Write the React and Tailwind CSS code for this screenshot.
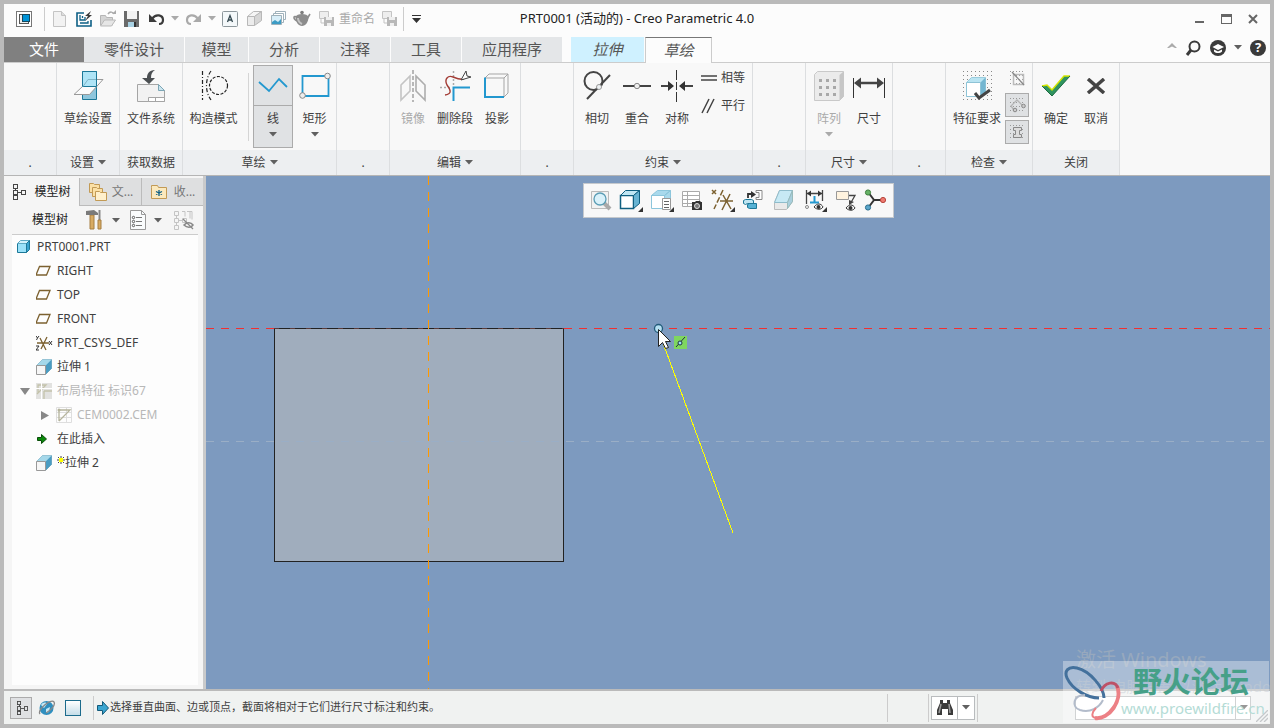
import React from "react";

const Caret = ({ className = "text-[#606060]" }) => (
  <svg width="8" height="5" viewBox="0 0 8 5" className={`shrink-0 ${className}`}>
    <path d="M0 0h8L4 4.5z" fill="currentColor" />
  </svg>
);

/* ---------- shared icons ---------- */

const TreeIcon = ({ color = "#444", size = 16 }) => (
  <svg width={size} height={size} viewBox="0 0 16 16" fill="none" stroke={color} shapeRendering="crispEdges">
    <path d="M1.5 .5h4v4h-4zM1.5 6.5h4v4h-4zM1.5 11.5h4v4h-4zM9.5 6.5h4v4h-4zM3.5 4v3M3.5 10v2M6 8.5h3" />
  </svg>
);

const NewIcon = () => (
  <svg width="16" height="18" viewBox="0 0 16 18">
    <path d="M1.5 1.5h8l4 4v11h-12z" fill="#f2f2f2" stroke="#c4c4c4" />
    <path d="M9.500 1.500v4h4" fill="#ddd" stroke="#c4c4c4" />
  </svg>
);

const RegenSaveIcon = () => (
  <svg width="18" height="18" viewBox="0 0 18 18" fill="none">
    <path d="M9 3H2v13h14v-6" stroke="#0d5f85" strokeWidth="1.6" />
    <path d="M5 5v5h5v-3M5 13h8v-2M7.500 6v2" stroke="#0d5f85" strokeWidth="1.300" />
    <path d="M16 1l-6 5h3l-3 5 7-6h-3z" fill="#3b3b3b" />
  </svg>
);

const OpenIcon = () => (
  <svg width="18" height="18" viewBox="0 0 18 18">
    <path d="M1.500 15V5.500h5l1 2h6V15z" fill="#d5d5d5" stroke="#b5b5b5" />
    <path d="M1.500 16l4-6h11l-4 6z" fill="#e6e6e6" stroke="#b9b9b9" />
    <path d="M9 4c2-3 5-2 6 0" fill="none" stroke="#aaa" strokeWidth="1.500" />
    <path d="M13 4h4v-4z" fill="#aaa" />
  </svg>
);

const SaveIcon = () => (
  <svg width="16" height="16" viewBox="0 0 16 16">
    <path d="M0 0h15v16H0z" fill="#6a6a6a" />
    <path d="M3 0h10v8H3z" fill="#f2f2f2" />
    <path d="M4 11h8v5H4z" fill="#a9d2e4" />
    <path d="M10 11h2v5h-2z" fill="#333" />
  </svg>
);

const UndoIcon = ({ flip, color }) => (
  <svg width="17" height="14" viewBox="0 0 17 14" className={flip ? "-scale-x-100" : ""}>
    <path d="M4 7c4-6 11-4 11 1 0 3-2 4-4 4" fill="none" stroke={color} strokeWidth="2.200" />
    <path d="M1 2v8h8z" fill={color} />
  </svg>
);

const AIcon = () => (
  <svg width="16" height="16" viewBox="0 0 16 16">
    <rect x=".5" y=".5" width="15" height="15" rx="1" fill="#f4f8fa" stroke="#8d979c" />
    <path d="M5.500 11L8 4.500l2.500 6.500M6.500 9h3" fill="none" stroke="#33474f" strokeWidth="1.300" />
  </svg>
);

const GreyBoxIcon = () => (
  <svg width="17" height="17" viewBox="0 0 17 17" stroke="#b8b8b8">
    <path d="M1.500 6.500h7v9h-7z" fill="#ececec" />
    <path d="M1.500 6.500l6-5h8l-7 5z" fill="#f5f5f5" />
    <path d="M8.500 6.500l7-5v9l-7 5z" fill="#d6d6d6" />
  </svg>
);

const LayersIcon = () => (
  <svg width="17" height="17" viewBox="0 0 17 17" stroke="#9fb1ba">
    <path d="M5.500 1.500h10v8h-10z" fill="#fff" />
    <path d="M3.500 3.500h10v9h-10z" fill="#fff" />
    <path d="M1.500 5.500h10v9h-10z" fill="#d8eef8" />
    <path d="M2 12l3-2 3 2 3-3v5H2z" fill="#3c9cc5" stroke="none" />
  </svg>
);

const TeapotIcon = () => (
  <svg width="18" height="17" viewBox="0 0 18 17">
    <path d="M4 7c-4-2-4 2 0 4M14 9l3-5" fill="none" stroke="#8c8c8c" strokeWidth="1.600" />
    <path d="M2.500 7c0 5 3 9 6.500 9s6.500-4 6.500-9c-1-4-12-4-13 0z" fill="#8c8c8c" />
    <path d="M5 8c0 3 2 5 4 6" fill="none" stroke="#c4c4c4" strokeWidth="2" />
    <circle cx="9" cy="2.500" r="1.800" fill="#7c7c7c" />
  </svg>
);

const RenameIcon = () => (
  <svg width="17" height="17" viewBox="0 0 17 17">
    <path d="M1.500 1.500h9v7h-9z" fill="#eee" stroke="#c4c4c4" />
    <path d="M3 9v4h3" fill="none" stroke="#c4c4c4" />
    <path d="M6 7h10v9H6z" fill="#b8b8b8" />
    <path d="M8 7h6v3H8zM9 13h4v3H9z" fill="#efefef" />
  </svg>
);

const CubeIcon = () => (
  <svg width="16" height="16" viewBox="0 0 16 16" stroke="#1c7898">
    <path d="M.5 4.500h9v9h-9z" fill="#9be2fa" />
    <path d="M.5 4.500l3-3h9l-3 3z" fill="#d3f3fd" stroke="#5da9c4" />
    <path d="M9.500 4.500l3-3v9l-3 3z" fill="#3aa5d0" />
  </svg>
);

const PlaneIcon = () => (
  <svg width="16" height="16" viewBox="0 0 16 16">
    <path d="M3.500 3.500H14l-3.500 8.500H0z" fill="none" stroke="#7c6130" strokeWidth="1.300" />
  </svg>
);

const CsysIcon = () => (
  <svg width="18" height="16" viewBox="0 0 18 16" fill="none">
    <path d="M1 8h12M4 3l6 12M11 2L5 14" stroke="#7c6130" strokeWidth="1.300" />
    <path d="M0 1l1.500 2L3 1M1.500 3L.5 5M0 11h3l-3 4h3M13 6l3 4M16 6l-3 4" stroke="#333" />
  </svg>
);

const ExtrudeIcon = () => (
  <svg width="17" height="17" viewBox="0 0 17 17">
    <path d="M.5 6.500l6-6h9v9l-6 6" fill="#7fc4e0" stroke="#86b0c2" />
    <path d="M9.500 6.500l6-6v9l-6 6z" fill="#4a9cc2" />
    <path d="M.5 6.500l6-6h9l-6 6z" fill="#a5d8ea" />
    <path d="M.5 6.500h9v9h-9z" fill="#f6f6f6" stroke="#999" />
  </svg>
);

const LayoutFeatureIcon = () => (
  <svg width="16" height="16" viewBox="0 0 16 16">
    <path d="M0 0h16v16H0z" fill="#e2e2e0" />
    <path d="M2 10V2h8L1 11M8 8h8M8 8v8" fill="none" stroke="#c3c2aa" strokeWidth="1.300" />
    <path d="M0 5.500h16M5.500 0v16" stroke="#fff" />
  </svg>
);

const CemIcon = () => (
  <svg width="16" height="16" viewBox="0 0 16 16" fill="none">
    <path d="M.5.5h15v15H.5zM0 5.500h16M0 10.500h16M10.500 0v16" stroke="#dedede" />
    <path d="M3 14V3h11L3 14" stroke="#b5b49c" strokeWidth="1.300" />
    <circle cx="3" cy="3" r="1.500" fill="#b5b49c" />
  </svg>
);

const InsertIcon = () => (
  <svg width="16" height="16" viewBox="0 0 16 16">
    <path d="M1.500 6.500h4v-3l5 4.500-5 4.500v-3h-4z" fill="#0b8a0b" stroke="#0a4d0a" />
  </svg>
);

const SparkIcon = () => (
  <svg width="8" height="8" viewBox="0 0 8 8" className="mb-1.5 shrink-0">
    <path d="M4 0v8M0 4h8M1 1l6 6M7 1L1 7" stroke="#444" strokeWidth="1" />
    <path d="M2 2h4v4H2z" fill="#ff0" />
  </svg>
);

/* ---------- ribbon icons ---------- */

const SketchSetupIcon = () => (
  <svg width="32" height="32" viewBox="0 0 32 32">
    <path d="M10.500 1.500h14v28h-14z" fill="#8fc6dc" stroke="#1c7898" />
    <path d="M24.500 9.500h6.500L17.500 24.500H2L10.500 16.500z" fill="#fbfbfb" stroke="#999" />
    <path d="M10.500 1.500h14v15h-14z" fill="#aee4f6" stroke="#1c7898" />
    <path d="M16 9.500h8" stroke="#7fb5c8" />
    <path d="M11 16.500l5-7" stroke="#7fb5c8" />
  </svg>
);

const FileSystemIcon = () => (
  <svg width="32" height="34" viewBox="0 0 32 34">
    <path d="M2.500 15.500h21l6 6v11h-27z" fill="#f2f2f2" stroke="#a5a5a5" />
    <path d="M23.500 15.500v6h6z" fill="#cbe5ef" stroke="#7da6b5" />
    <path d="M13.500 28.500h16v4h-16zM20.500 28.500v4" fill="#fff" stroke="#a5a5a5" />
    <path d="M20 1c-6 0-8 4-8 8H7l7 6 6-6h-4c0-4 1-6 4-8z" fill="#4b4f52" />
  </svg>
);

const ConstructionIcon = () => (
  <svg width="32" height="32" viewBox="0 0 32 32" fill="none" stroke="#222" strokeWidth="1.200">
    <path d="M4.500 1v29" strokeDasharray="4 2 1 2" />
    <path d="M13 1c-6 8-6 21 0 29" strokeDasharray="4 2 1 2" />
    <circle cx="20.500" cy="15.500" r="9" strokeDasharray="3 1.500" />
  </svg>
);

const LineIcon = () => (
  <svg width="30" height="18" viewBox="0 0 30 18" fill="none" stroke="#2398cf" strokeWidth="1.800">
    <path d="M1 5l10 9L21 2l8 8" />
  </svg>
);

const RectIcon = () => (
  <svg width="32" height="28" viewBox="0 0 32 28">
    <path d="M3.500 4h26v20h-26z" fill="none" stroke="#2398cf" strokeWidth="1.800" />
    <circle cx="28.500" cy="4" r="2.800" fill="#eee" stroke="#888" />
    <circle cx="3.500" cy="23.500" r="2.800" fill="#eee" stroke="#888" />
  </svg>
);

const MirrorIcon = () => (
  <svg width="28" height="34" viewBox="0 0 28 34" fill="none">
    <path d="M2 16l9-9v15l-9 9z" stroke="#c4c4c4" strokeWidth="1.600" />
    <path d="M26 16l-9-9v15l9 9z" stroke="#adadad" strokeWidth="1.600" />
    <path d="M14 1v32" stroke="#777" strokeDasharray="4 2" />
  </svg>
);

const DeleteSegIcon = () => (
  <svg width="32" height="34" viewBox="0 0 32 34" fill="none">
    <path d="M14.500 2v14M1 18.500h12" stroke="#aaa" strokeDasharray="2 2" strokeWidth="1.500" />
    <path d="M6 26c8-1 5-6 2-10C5 10 9 6 14 8c5 2 8 3 11 2" stroke="#a33c35" strokeWidth="1.400" />
    <path d="M14.500 32V18.500H31" stroke="#2398cf" strokeWidth="2" />
    <path d="M22 11l5-9 1 5 4 1z" fill="#fff" stroke="#444" />
  </svg>
);

const ProjectIcon = () => (
  <svg width="28" height="28" viewBox="0 0 28 28" fill="none">
    <path d="M2 6l4-4h19v19l-4 4M21 6l4-4M21 6v19M2 6h19" stroke="#a5a5a5" />
    <path d="M2 5.500V25h19" stroke="#2398cf" strokeWidth="2" />
  </svg>
);

const TangentIcon = () => (
  <svg width="32" height="32" viewBox="0 0 32 32" fill="none" stroke="#444" strokeWidth="2">
    <circle cx="12.500" cy="11" r="9" />
    <path d="M6 29L29 5" />
    <circle cx="18" cy="17" r="2.500" fill="#eef2f4" stroke="#999" strokeWidth="1" />
  </svg>
);

const CoincidentIcon = () => (
  <svg width="30" height="10" viewBox="0 0 30 10">
    <path d="M1 5h28" stroke="#444" strokeWidth="2" />
    <circle cx="15" cy="5" r="2.700" fill="#eee" stroke="#888" />
  </svg>
);

const SymmetricIcon = () => (
  <svg width="32" height="34" viewBox="0 0 32 34">
    <path d="M15.500 1v10M15.500 13v8M15.500 23v10" stroke="#333" />
    <path d="M0 17h9M22 17h10" stroke="#444" strokeWidth="2" />
    <path d="M7 12l6 5-6 5zM24 12l-6 5 6 5z" fill="#333" />
  </svg>
);

const PatternIcon = () => (
  <svg width="32" height="32" viewBox="0 0 32 32">
    <path d="M1.500 4.500l3-3h26v25l-4 4h-25z" fill="#ebebeb" stroke="#c9c9c9" />
    <path d="M26.500 5l4-3.500v25l-4 4z" fill="#c6c6c6" />
    <path
      d="M6 9h3v3H6zM13 9h3v3h-3zM20 9h3v3h-3zM6 16h3v3H6zM13 16h3v3h-3zM20 16h3v3h-3zM6 23h3v3H6zM13 23h3v3h-3zM20 23h3v3h-3z"
      fill="#a8a8a8"
    />
  </svg>
);

const DimIcon = () => (
  <svg width="34" height="26" viewBox="0 0 34 26">
    <path d="M1.500 5v20M32.500 5v20" stroke="#333" />
    <path d="M7 10h20" stroke="#444" strokeWidth="2.500" />
    <path d="M2 10l7-5.500v11zM32 10l-7-5.500v11z" fill="#444" />
  </svg>
);

const FeatureReqIcon = () => (
  <svg width="32" height="32" viewBox="0 0 32 32">
    <path
      d="M2 1.500h29M2 5.500h29M2 9.500h29M2 13.500h29M2 17.500h29M2 21.500h29M2 25.500h29M2 29.500h29"
      stroke="#888"
      strokeDasharray="1 3"
    />
    <path d="M5.500 12.500l5-5h14v14l-5 5h-14z" fill="#b9e4f2" stroke="#9accdd" />
    <path d="M19.500 12.500l5-5v14l-5 5z" fill="#73b6d1" />
    <path d="M5.500 12.500h14v14h-14z" fill="#fff" stroke="#8ec3d6" />
    <path d="M14 23l4 5 11-8" fill="none" stroke="#444" strokeWidth="3" />
  </svg>
);

const dots = (
  <path d="M1 1.500h15M1 5.500h15M1 9.500h15M1 13.500h15" stroke="#999" strokeDasharray="1 2" />
);

const OverlapIcon = () => (
  <svg width="17" height="17" viewBox="0 0 17 17" fill="none" stroke="#bbb">
    {dots}
    <path d="M4.500 4.500h10v10h-10z" strokeWidth="1.500" />
    <path d="M3 2l12 13" stroke="#888" strokeWidth="1.300" />
  </svg>
);

const OpenEndsIcon = () => (
  <svg width="17" height="17" viewBox="0 0 17 17" fill="none" stroke="#b5b5b5">
    {dots}
    <path d="M5 13L2 9l6-6 6 6" strokeWidth="1.300" />
    <circle cx="6" cy="13" r="1.800" fill="#ccc" stroke="#888" />
    <circle cx="14.500" cy="9" r="1.800" fill="#ccc" stroke="#888" />
  </svg>
);

const ShadeLoopIcon = () => (
  <svg width="17" height="17" viewBox="0 0 17 17" fill="#ddd" stroke="#888">
    {dots}
    <path d="M4.500 3.500h8v3h-2v4h2v3h-8v-3h2v-4h-2z" />
  </svg>
);

const OkIcon = () => (
  <svg width="30" height="22" viewBox="0 0 30 22">
    <path d="M1 11l5-1 5 5L23 1h6L11 21z" fill="#2f9460" />
    <path d="M1 11l5-1 5 5L23 1h6" fill="none" stroke="#d3e600" strokeWidth="1.500" />
    <path d="M1 11l10 10L29 1" fill="none" stroke="#1c6b41" />
  </svg>
);

const CancelIcon = () => (
  <svg width="20" height="16" viewBox="0 0 20 16">
    <path d="M2 1l16 14M18 1L2 15" stroke="#444" strokeWidth="3.500" />
  </svg>
);

/* ---------- ribbon building blocks ---------- */

const Group = ({ title = ".", caret, width, children }) => (
  <section className={`flex shrink-0 flex-col border-r border-[#dcdee0] ${width}`}>
    <div className="flex h-[87px] justify-center pt-0.5">{children}</div>
    <div className="flex h-[25px] items-center justify-center gap-1 bg-[#edeff1]">
      <span>{title}</span>
      {caret && <Caret />}
    </div>
  </section>
);

const Tool = ({ icon, label, width = "w-10", disabled, caret, active }) => (
  <button
    disabled={disabled}
    className={`flex h-[83px] flex-col items-center border whitespace-nowrap ${width} ${
      disabled ? "text-[#aaa]" : ""
    } ${active ? "border-[#ababab] bg-[#e0e2e4]" : "border-transparent"}`}
  >
    <span
      className={`flex h-10 w-full items-center justify-center border-b ${
        active ? "border-[#ababab]" : "border-transparent"
      }`}
    >
      {icon}
    </span>
    <span className="mt-1 leading-[18px]">{label}</span>
    {caret && <Caret className={disabled ? "mt-1 text-[#aaa]" : "mt-1 text-[#606060]"} />}
  </button>
);

const tabs = [
  { name: "零件设计", width: "w-[100px]" },
  { name: "模型", width: "w-[63px]" },
  { name: "分析", width: "w-[70px]" },
  { name: "注释", width: "w-[70px]" },
  { name: "工具", width: "w-[70px]" },
  { name: "应用程序", width: "w-[100px]" },
];

const TitleBar = () => (
  <header className="grid h-[33px] grid-cols-[1fr_auto_1fr] items-center pb-1">
    <div className="flex items-center text-xs">
      <button aria-label="窗口" className="flex w-10 justify-center">
        <svg width="16" height="16" viewBox="0 0 16 16" shapeRendering="crispEdges">
          <path d="M.5.5h15v15H.5z" fill="#fff" stroke="#777" />
          <path d="M3.500 3.500h9v9h-9z" fill="#eee" stroke="#555" />
          <path d="M6 3h7v7H6z" fill="#0094d8" stroke="#17475c" />
        </svg>
      </button>
      <span className="mr-[3px] h-6 w-px bg-[#ccc]" />
      <button aria-label="新建" className="flex w-6 justify-center"><NewIcon /></button>
      <button aria-label="重新生成" className="flex w-6 justify-center"><RegenSaveIcon /></button>
      <button aria-label="打开" className="flex w-6 justify-center"><OpenIcon /></button>
      <button aria-label="保存" className="flex w-6 justify-center"><SaveIcon /></button>
      <button aria-label="撤消" className="flex w-6 justify-center"><UndoIcon color="#3c3c3c" /></button>
      <button aria-label="撤消列表" className="flex w-[13px] justify-center"><Caret className="text-[#aaa]" /></button>
      <button aria-label="重做" className="flex w-6 justify-center"><UndoIcon flip color="#aaa" /></button>
      <button aria-label="重做列表" className="flex w-[13px] justify-center"><Caret className="text-[#aaa]" /></button>
      <button aria-label="注释" className="flex w-6 justify-center"><AIcon /></button>
      <button aria-label="模型" className="flex w-6 justify-center"><GreyBoxIcon /></button>
      <button aria-label="窗口列表" className="flex w-6 justify-center"><LayersIcon /></button>
      <button aria-label="渲染" className="flex w-6 justify-center"><TeapotIcon /></button>
      <button className="flex items-center gap-1 pl-1 text-[#aaa]">
        <RenameIcon />
        重命名
      </button>
      <button aria-label="另存" className="flex w-7 justify-center"><RenameIcon /></button>
      <span className="h-6 w-px bg-[#ccc]" />
      <button aria-label="自定义" className="flex w-6 justify-center">
        <svg width="9" height="8" viewBox="0 0 9 8" fill="#333">
          <path d="M0 0h9v1H0zM0 3h9L4.500 8z" />
        </svg>
      </button>
    </div>
    <h1 className="whitespace-nowrap text-[13px] text-[#222]">PRT0001 (活动的) - Creo Parametric 4.0</h1>
    <div className="flex items-center justify-end gap-4 pr-3 text-[#666]">
      <button aria-label="最小化">
        <svg width="10" height="10" viewBox="0 0 10 10"><path d="M0 7h9v2H0z" fill="currentColor" /></svg>
      </button>
      <button aria-label="最大化">
        <svg width="11" height="10" viewBox="0 0 11 10" shapeRendering="crispEdges">
          <path d="M.5.5h10v9H.5z" fill="none" stroke="currentColor" />
          <path d="M0 0h11v3H0z" fill="currentColor" />
        </svg>
      </button>
      <button aria-label="关闭">
        <svg width="10" height="10" viewBox="0 0 10 10"><path d="M1 1l8 8M9 1L1 9" stroke="currentColor" strokeWidth="2" /></svg>
      </button>
    </div>
  </header>
);

const TabBar = () => (
  <nav className="flex h-[26px] items-stretch border-b border-[#ccc] text-[15px] text-[#555]">
    <button className="w-20 bg-[#808080] text-white">文件</button>
    <div className="flex gap-px">
      {tabs.map((t) => (
        <button key={t.name} className={`bg-[#e4e6e8] ${t.width}`}>{t.name}</button>
      ))}
    </div>
    <button className="ml-[9px] w-[73px] bg-[#cff1ff] italic">拉伸</button>
    <button className="-mb-px ml-px w-[67px] border border-b-0 border-[#ccc] border-t-[#777] bg-[#fcfcfc] italic">草绘</button>
    <div className="ml-auto flex items-center gap-2 pr-1 pb-1 text-[#3a3a3a]">
      <button aria-label="折叠功能区" className="mb-1">
        <svg width="10" height="6" viewBox="0 0 10 6"><path d="M0 5l5-5 5 5H8L5 3.500 2 5z" fill="#aaa" /></svg>
      </button>
      <button aria-label="搜索">
        <svg width="17" height="16" viewBox="0 0 17 16" fill="none" stroke="currentColor">
          <circle cx="9.500" cy="6.500" r="5" strokeWidth="2" />
          <path d="M6 10l-4 5" strokeWidth="3" />
        </svg>
      </button>
      <button aria-label="学习连接器">
        <svg width="16" height="16" viewBox="0 0 16 16">
          <circle cx="8" cy="8" r="8" fill="currentColor" />
          <path d="M2.500 7L8 4l6 3-6 3z" fill="#fff" />
          <path d="M4 9.500v2c2 2 6 2 8 0v-2l-4 2z" fill="#fff" />
        </svg>
      </button>
      <button aria-label="帮助菜单"><Caret /></button>
      <button aria-label="帮助" className="flex size-4 items-center justify-center rounded-full bg-[#3a3a3a] text-[13px] font-bold text-white">?</button>
    </div>
  </nav>
);

const Ribbon = () => (
  <div className="flex overflow-hidden border-b border-[#b5b5b5] bg-[#f8f8f8] text-xs text-[#404040]">
    <Group width="w-[53px]" />
    <Group width="w-[63px]" title="设置" caret>
      <Tool width="w-full" icon={<SketchSetupIcon />} label="草绘设置" />
    </Group>
    <Group width="w-[63px]" title="获取数据">
      <Tool width="w-full" icon={<FileSystemIcon />} label="文件系统" />
    </Group>
    <Group width="w-[154px]" title="草绘" caret>
      <Tool width="w-[61px]" icon={<ConstructionIcon />} label="构造模式" />
      <span className="mx-1 mt-2 h-[68px] w-px bg-[#d5d5d5]" />
      <Tool active caret icon={<LineIcon />} label="线" />
      <Tool width="w-[43px]" caret icon={<RectIcon />} label="矩形" />
    </Group>
    <Group width="w-[53px]" />
    <Group width="w-[131px]" title="编辑" caret>
      <Tool disabled icon={<MirrorIcon />} label="镜像" />
      <Tool width="w-11" icon={<DeleteSegIcon />} label="删除段" />
      <Tool icon={<ProjectIcon />} label="投影" />
    </Group>
    <Group width="w-[53px]" />
    <Group width="w-[179px]" title="约束" caret>
      <Tool icon={<TangentIcon />} label="相切" />
      <Tool icon={<CoincidentIcon />} label="重合" />
      <Tool icon={<SymmetricIcon />} label="对称" />
      <div className="flex flex-col gap-2.5 pt-1 pr-1 pl-1">
        <button className="flex items-center gap-1 leading-[18px]">
          <svg width="16" height="16" viewBox="0 0 16 16"><path d="M0 6h16M0 10h16" stroke="#444" strokeWidth="1.500" /></svg>
          相等
        </button>
        <button className="flex items-center gap-1 leading-[18px]">
          <svg width="16" height="16" viewBox="0 0 16 16"><path d="M1 15L8 1M6 15l7-14" stroke="#444" strokeWidth="1.500" /></svg>
          平行
        </button>
      </div>
    </Group>
    <Group width="w-[53px]" />
    <Group width="w-[87px]" title="尺寸" caret>
      <Tool disabled caret icon={<PatternIcon />} label="阵列" />
      <Tool icon={<DimIcon />} label="尺寸" />
    </Group>
    <Group width="w-[53px]" />
    <Group width="w-[87px]" title="检查" caret>
      <Tool width="w-14" icon={<FeatureReqIcon />} label="特征要求" />
      <div className="flex flex-col gap-[3px] pt-px">
        <button aria-label="重叠几何" className="flex size-6 items-center justify-center"><OverlapIcon /></button>
        <button aria-label="突出显示开放端" className="flex size-6 items-center justify-center border border-[#ababab] bg-[#dfe1e3]"><OpenEndsIcon /></button>
        <button aria-label="着色封闭环" className="flex size-6 items-center justify-center border border-[#ababab] bg-[#dfe1e3]"><ShadeLoopIcon /></button>
      </div>
    </Group>
    <Group width="w-[87px]" title="关闭">
      <Tool icon={<OkIcon />} label="确定" />
      <Tool icon={<CancelIcon />} label="取消" />
    </Group>
  </div>
);

/* ---------- model tree ---------- */

const treeItems = [
  { label: "PRT0001.PRT", icon: <CubeIcon />, level: 0 },
  { label: "RIGHT", icon: <PlaneIcon />, level: 1 },
  { label: "TOP", icon: <PlaneIcon />, level: 1 },
  { label: "FRONT", icon: <PlaneIcon />, level: 1 },
  { label: "PRT_CSYS_DEF", icon: <CsysIcon />, level: 1 },
  { label: "拉伸 1", icon: <ExtrudeIcon />, level: 1 },
  { label: "布局特征 标识67", icon: <LayoutFeatureIcon />, level: 1, dim: true, arrow: "down" },
  { label: "CEM0002.CEM", icon: <CemIcon />, level: 2, dim: true, arrow: "right" },
  { label: "在此插入", icon: <InsertIcon />, level: 1 },
  { label: "拉伸 2", icon: <ExtrudeIcon />, level: 1, isNew: true },
];

const FolderIcon = ({ star }) => (
  <svg width="20" height="20" viewBox="0 0 20 20" stroke="#c29a55">
    {star ? (
      <>
        <path d="M1.500 5.500v-2h6l1 2h8v11h-15z" fill="#fbe9bd" />
        <path d="M9 8v6M6 9.500l6 3M12 9.500l-6 3" stroke="#0d5f85" strokeWidth="1.300" />
      </>
    ) : (
      <>
        <path d="M1.500 1.500h4l1 1h5v8h-10z" fill="#fbe0a5" />
        <path d="M4.500 5.500h4l1 1h5v8h-10z" fill="#fbe0a5" />
        <path d="M7.500 9.500h4l1 1h6v8h-11z" fill="#fff0cc" />
      </>
    )}
  </svg>
);

const ModelTree = () => (
  <aside className="flex w-[202px] shrink-0 flex-col border-r-[3px] border-[#c9cacb] bg-[#f5f5f5] text-xs text-[#404040]">
    <div className="flex h-[30px] pt-0.5">
      <button className="flex w-[75px] items-center justify-center gap-1.5 pb-px whitespace-nowrap text-[#222]"><TreeIcon />模型树</button>
      <button className="flex flex-1 items-center justify-center gap-1 border-b border-l border-[#bbb] bg-[#dedfe0] text-[#777]"><FolderIcon />文...</button>
      <button className="flex flex-1 items-center justify-center gap-1 border-b border-l border-[#bbb] bg-[#dedfe0] text-[#777]"><FolderIcon star />收...</button>
    </div>
    <div className="mr-[5px] ml-2 flex h-[29px] items-center border-b border-[#ccc] pl-5">
      <h2 className="mr-4 text-[#222]">模型树</h2>
      <button aria-label="设置" className="flex items-center gap-2">
        <svg width="20" height="22" viewBox="0 0 20 22">
          <path d="M6 6h4v14H6z" fill="#d8ab63" stroke="#a67f42" />
          <path d="M2 6V2l8-1 4 3v2z" fill="#7a7a7a" />
          <path d="M15.500 1v10" stroke="#888" strokeWidth="2" />
          <path d="M14 11h3v9h-3z" fill="#d8ab63" stroke="#a67f42" />
        </svg>
        <Caret />
      </button>
      <button aria-label="显示" className="ml-2.5 flex items-center gap-2">
        <svg width="16" height="20" viewBox="0 0 16 20" fill="none">
          <path d="M.5.5h11l4 4v15H.5z" fill="#fafcfd" stroke="#999" />
          <path d="M11.500.5v4h4" stroke="#999" />
          <path d="M6 7.500h6M6 11.500h6M6 15.500h6" stroke="#777" />
          <circle cx="3.500" cy="7.500" r="1.200" stroke="#555" />
          <circle cx="3.500" cy="11.500" r="1.200" stroke="#555" />
          <circle cx="3.500" cy="15.500" r="1.200" stroke="#555" />
        </svg>
        <Caret />
      </button>
      <button aria-label="树过滤器" className="ml-3">
        <svg width="20" height="20" viewBox="0 0 20 20" fill="none" stroke="#c4c4c4">
          <path d="M.5 1.500h4v4h-4zM.5 8.500h4v4h-4zM.5 15.500h4v4h-4zM8.500 8.500h4v4h-4zM2.500 6v2M2.500 13v2M5 10.500h3M8 1.500h3v5M13 1.500h3v7M16 1.500h2v8" />
          <path d="M10 15c3-3 7-3 9 0-2 3-6 3-9 0z" stroke="#888" strokeWidth="1.500" />
          <path d="M9 9l10 10" stroke="#888" strokeWidth="1.300" />
        </svg>
      </button>
    </div>
    <ul className="mr-[5px] mb-1 ml-2 flex-1 bg-[#fdfdfd]">
      {treeItems.map((item) => (
        <li
          key={item.label}
          className={`flex h-6 items-center gap-1 whitespace-nowrap ${item.level === 2 ? "pl-[25px]" : "pl-[5px]"} ${
            item.dim ? "text-[#b8b8b8]" : ""
          }`}
        >
          {item.level > 0 && (
            <span className="flex w-[15px] shrink-0 justify-center">
              {item.arrow && (
                <svg width="10" height="9" viewBox="0 0 10 9" className="text-[#888]" fill="currentColor">
                  <path d={item.arrow === "down" ? "M0 1h10L5 8z" : "M1 0v9l8-4.500z"} />
                </svg>
              )}
            </span>
          )}
          <span className={item.level > 0 ? "w-[17px] shrink-0" : "w-4 shrink-0"}>{item.icon}</span>
          {item.isNew && <SparkIcon />}
          <button className={item.isNew ? "-ml-1" : ""}>{item.label}</button>
        </li>
      ))}
    </ul>
  </aside>
);

/* ---------- graphics area ---------- */

const Corner = () => <path d="M24 19v5h-5z" fill="#333" />;

const viewTools = [
  {
    name: "重新调整",
    art: (
      <>
        <path d="M2.500 3.500h17v17h-17z" fill="#f2f2f2" stroke="#bbb" />
        <path d="M15 15l6 6" stroke="#aaa" strokeWidth="4" />
        <circle cx="11" cy="11" r="6" fill="#d9f1fa" stroke="#5b9db5" strokeWidth="1.300" />
      </>
    ),
  },
  {
    name: "显示样式",
    art: (
      <>
        <path d="M1.500 7.500h13v13h-13z" fill="#fff" stroke="#0f5f80" strokeWidth="1.500" />
        <path d="M1.500 7.500l5-5h14l-6 5z" fill="#c0e6f3" stroke="#0f5f80" />
        <path d="M14.500 7.500l6-5v13l-6 5z" fill="#67b3d2" stroke="#0f5f80" />
        <Corner />
      </>
    ),
  },
  {
    name: "已保存方向",
    art: (
      <>
        <path d="M1.500 7.500h13v13h-13z" fill="#fff" stroke="#8cc6dc" />
        <path d="M1.500 7.500l6-5h13l-6 5zM14.500 7.500l6-5v13l-6 5z" fill="#a9d9ec" stroke="#8cc6dc" />
        <path d="M12.500 10.500h8v11h-8z" fill="#fff" stroke="#999" />
        <path d="M14 13.500h5M14 16.500h5M14 19.500h5" stroke="#666" />
        <Corner />
      </>
    ),
  },
  {
    name: "视图管理器",
    art: (
      <>
        <path d="M2.500 3.500h17v15h-17zM2 7.500h17M2 11.500h17M2 15.500h17M7.500 3v15" fill="#fff" stroke="#aaa" />
        <path d="M12 14h3l1-1h4l1 1h1v8H12z" fill="#333" />
        <circle cx="17" cy="18" r="2.500" fill="#777" stroke="#ddd" />
      </>
    ),
  },
  {
    name: "基准显示",
    art: (
      <>
        <path d="M1 2l4 4M5 2L1 6M12 2L3 21" stroke="#7c6130" strokeWidth="1.500" strokeDasharray="6 2" />
        <path d="M9 13h13M12 7l8 14M19 6l-8 16" stroke="#7c6130" strokeWidth="1.500" />
        <Corner />
      </>
    ),
  },
  {
    name: "注释显示",
    art: (
      <>
        <path d="M6 10V6h5" stroke="#333" strokeWidth="1.800" />
        <path d="M9 3l5 3.500L9 10z" fill="#333" />
        <path d="M14 2.500h6v9h-6v-2h3v-5h-3z" fill="#fff" stroke="#888" />
        <path d="M1.500 12.500l2-1h6l2 1v3h-6l-2 1-2-1z" fill="#bfe6f3" stroke="#1c7898" />
        <path d="M5.500 16.500l2-1h7v5h-7l-2-1z" fill="#55b2d5" stroke="#1c7898" />
      </>
    ),
  },
  {
    name: "透视图",
    art: (
      <>
        <path d="M2.500 14.500l5-12h13v11l-6 8h-12z" fill="#e9e9e9" stroke="#bbb" />
        <path d="M2.500 14.500l5-12h13l-5 12z" fill="#c7e9f4" stroke="#8fbccb" />
        <path d="M15.500 14.500v6l5-7v-11z" fill="#a9cfdd" stroke="#9bb" />
      </>
    ),
  },
  {
    name: "尺寸显示",
    art: (
      <>
        <path d="M3.500 2v14M19.500 2v11M4 5.500h15" stroke="#444" strokeWidth="1.300" />
        <path d="M4 5.500l4-3v6zM19 5.500l-4-3v6z" fill="#333" />
        <path d="M11.500 8v6M7 14.500h9" stroke="#2398cf" strokeWidth="2" />
        <circle cx="4" cy="19" r="1.500" stroke="#888" />
        <path d="M11 19c3-4 7-4 9 0-2 3-6 3-9 0z" fill="#fff" stroke="#333" />
        <circle cx="15.500" cy="19" r="2" fill="#333" />
        <Corner />
      </>
    ),
  },
  {
    name: "约束显示",
    art: (
      <>
        <path d="M2.500 3.500h12v8h-12z" fill="#fff3df" stroke="#999" />
        <path d="M15 7.500h6l-4 7" stroke="#444" strokeWidth="1.300" />
        <path d="M15 12v5l5-3z" fill="#444" />
        <path d="M12 20c3-4 7-4 9 0-2 3-6 3-9 0z" fill="#fff" stroke="#333" />
        <circle cx="16.500" cy="20" r="2" fill="#333" />
      </>
    ),
  },
  {
    name: "旋转中心",
    art: (
      <>
        <path d="M4 4l6 8-6 8M10 12h8" stroke="#333" strokeWidth="2" />
        <circle cx="4" cy="4.500" r="2.600" fill="#66b266" stroke="#3f7f3f" />
        <circle cx="4" cy="19.500" r="2.600" fill="#5aa5c9" stroke="#2c6f8f" />
        <circle cx="19" cy="12" r="2.600" fill="#ef7a70" stroke="#b5443b" />
      </>
    ),
  },
];

const GraphicsArea = () => (
  <main className="relative min-w-0 flex-1 overflow-hidden bg-[#7d9abf]">
    <svg className="absolute inset-0 size-full" fill="none">
      <rect x="68.500" y="152.500" width="289" height="233" fill="#a0adbd" stroke="#222" shapeRendering="crispEdges" />
      <path d="M0 265.500h2000" stroke="#9aaec6" strokeDasharray="8 7" />
      <path d="M0 152.500h68M358 152.500h2000" stroke="#f22f2f" strokeDasharray="8 7" shapeRendering="crispEdges" />
      <path d="M68 152.500h290" stroke="#5c3a3a" strokeDasharray="5 11" />
      <path d="M222.500 0v2000" stroke="#ff9900" strokeDasharray="9 7" shapeRendering="crispEdges" />
      <path d="M457 167l70 190" stroke="#ff0" shapeRendering="crispEdges" />
      <circle cx="452.500" cy="152.500" r="4" fill="#b5e0f2" stroke="#225a7a" strokeWidth="1.300" />
      <path d="M452.500 153.500v17l4-4 3 6 3-1-3-6h5z" fill="#fff" stroke="#222" />
      <path d="M468 160h13v13h-13z" fill="#7fd65f" />
      <path d="M470 171l9-10" stroke="#234" />
      <circle cx="474" cy="167" r="2" fill="#9be2fa" stroke="#234" />
    </svg>
    <div className="relative mx-auto mt-[7px] flex h-[35px] w-[311px] items-center justify-between border border-[#c5c9cd] bg-[#f8f8f8] pr-1 pb-0.5 pl-[5px]">
      {viewTools.map((t) => (
        <button key={t.name} aria-label={t.name}>
          <svg width="24" height="24" viewBox="0 0 24 24" fill="none">{t.art}</svg>
        </button>
      ))}
    </div>
  </main>
);

const StatusBar = () => (
  <footer className="flex h-[35px] items-center border-t-2 border-[#bababa] bg-[#f0f2f1] text-[11px] text-[#404040]">
    <button aria-label="导航器" className="ml-1.5 flex size-[22px] items-center justify-center border border-[#ababab] bg-[#dfe1e3] pl-1">
      <TreeIcon size={14} />
    </button>
    <button aria-label="浏览器" className="ml-1.5">
      <svg width="18" height="18" viewBox="0 0 18 18">
        <circle cx="8.500" cy="9" r="7" fill="#2f8fbf" />
        <path d="M3 6c2-3 5-3 6-1l-3 4zM8 10l4-2-1 5-3 1z" fill="#c4e9f6" />
        <path d="M2 15C-1 11 13-1 16 3c2 3-4 9-8 11" fill="none" stroke="#888" strokeWidth="1.300" />
      </svg>
    </button>
    <button aria-label="全屏" className="ml-[9px] size-4 border border-[#1c6b8c] bg-gradient-to-b from-white to-[#c5dde8]" />
    <span className="mr-[3px] ml-3 h-6 w-px bg-[#ccc]" />
    <svg width="12" height="14" viewBox="0 0 12 14">
      <path d="M.5 4.500h5v-4l6 6.500-6 6.500v-4h-5z" fill="#3aa5d0" stroke="#135a7a" />
    </svg>
    <p className="pl-px whitespace-nowrap">选择垂直曲面、边或顶点，截面将相对于它们进行尺寸标注和约束。</p>
    <span className="ml-auto h-7 w-px bg-[#ccc]" />
    <span className="mr-0.5 ml-10 h-7 w-px bg-[#ccc]" />
    <div className="mr-0.5 flex h-6 border border-[#b9bcbe] bg-white">
      <button aria-label="查找" className="flex w-[26px] items-center justify-center border-r border-[#b9bcbe]">
        <svg width="16" height="16" viewBox="0 0 16 16" fill="#3a3a3a">
          <path d="M3 0h3v3h4V0h3v3l3 7v5h-5V9H5v6H0v-5l3-7z" />
          <path d="M4 4L2 13M12 4l1 9" stroke="#9a9a9a" strokeWidth="1.500" />
        </svg>
      </button>
      <button aria-label="查找选项" className="flex w-4 items-center justify-center"><Caret /></button>
    </div>
    <span className="h-7 w-px bg-[#ccc]" />
    <div className="relative mr-[19px] ml-[97px] flex">
      <select aria-label="选择过滤器" className="h-6 w-44 appearance-none border border-[#b9bcbe] bg-white" />
      <span className="pointer-events-none absolute top-0 right-0 flex h-6 w-4 items-center justify-center border-l border-[#b9bcbe]">
        <Caret />
      </span>
    </div>
  </footer>
);

const Watermark = () => (
  <div className="pointer-events-none absolute right-0 bottom-0 h-[84px] w-[207px] overflow-hidden pt-1.5">
    <div className="pl-[13px] text-[20px] leading-7 whitespace-nowrap text-[#a9b3bd]/60">激活 Windows</div>
    <div className="pl-[13px] text-[15px] leading-6 whitespace-nowrap text-[#a9b3bd]/50">转到“电脑设置”以激活 Windows</div>
    <div className="absolute right-px bottom-px flex h-[62px] w-[206px] items-center bg-white/35">
      <svg width="58" height="60" viewBox="0 0 58 60" className="shrink-0" fill="none">
        <path d="M41 36c0-10-14-27-27-30C5 4 1 9 4 16c5 11 20 20 32 20" stroke="#44719c" strokeWidth="3" />
        <path d="M22 33c-12 0-14 12-5 15 10 3 19-2 23-10" stroke="#b3bccb" strokeWidth="2" />
        <path d="M54 24c6 14-8 34-22 32" stroke="#ec8085" strokeWidth="4" />
        <path d="M38 29c4-9 14-11 17-3" stroke="#bd5167" strokeWidth="3" />
        <path d="M34 56c-7 0-5-6-1-10" stroke="#ec8085" strokeWidth="2" />
      </svg>
      <div className="whitespace-nowrap">
        <div className="pl-3 font-['Noto_Sans_CJK_SC',sans-serif] text-[29px] leading-8 font-bold text-[#46a088]">野火论坛</div>
        <div className="text-[15px] leading-6 text-[#b5dcd6]">www.proewildfire.cn</div>
      </div>
    </div>
    <svg width="12" height="12" viewBox="0 0 12 12" className="absolute right-0.5 bottom-0.5">
      <path d="M0 12L12 0M4 12l8-8M8 12l4-4" stroke="#c5c8ca" strokeWidth="1.300" />
    </svg>
  </div>
);

export default function App() {
  return (
    <div className="relative flex h-screen flex-col overflow-hidden border-4 border-[#bababa] bg-[#fcfcfc] font-['Noto_Sans','Noto_Sans_CJK_SC',sans-serif]">
      <TitleBar />
      <TabBar />
      <Ribbon />
      <div className="flex min-h-0 flex-1">
        <ModelTree />
        <GraphicsArea />
      </div>
      <StatusBar />
      <Watermark />
    </div>
  );
}
